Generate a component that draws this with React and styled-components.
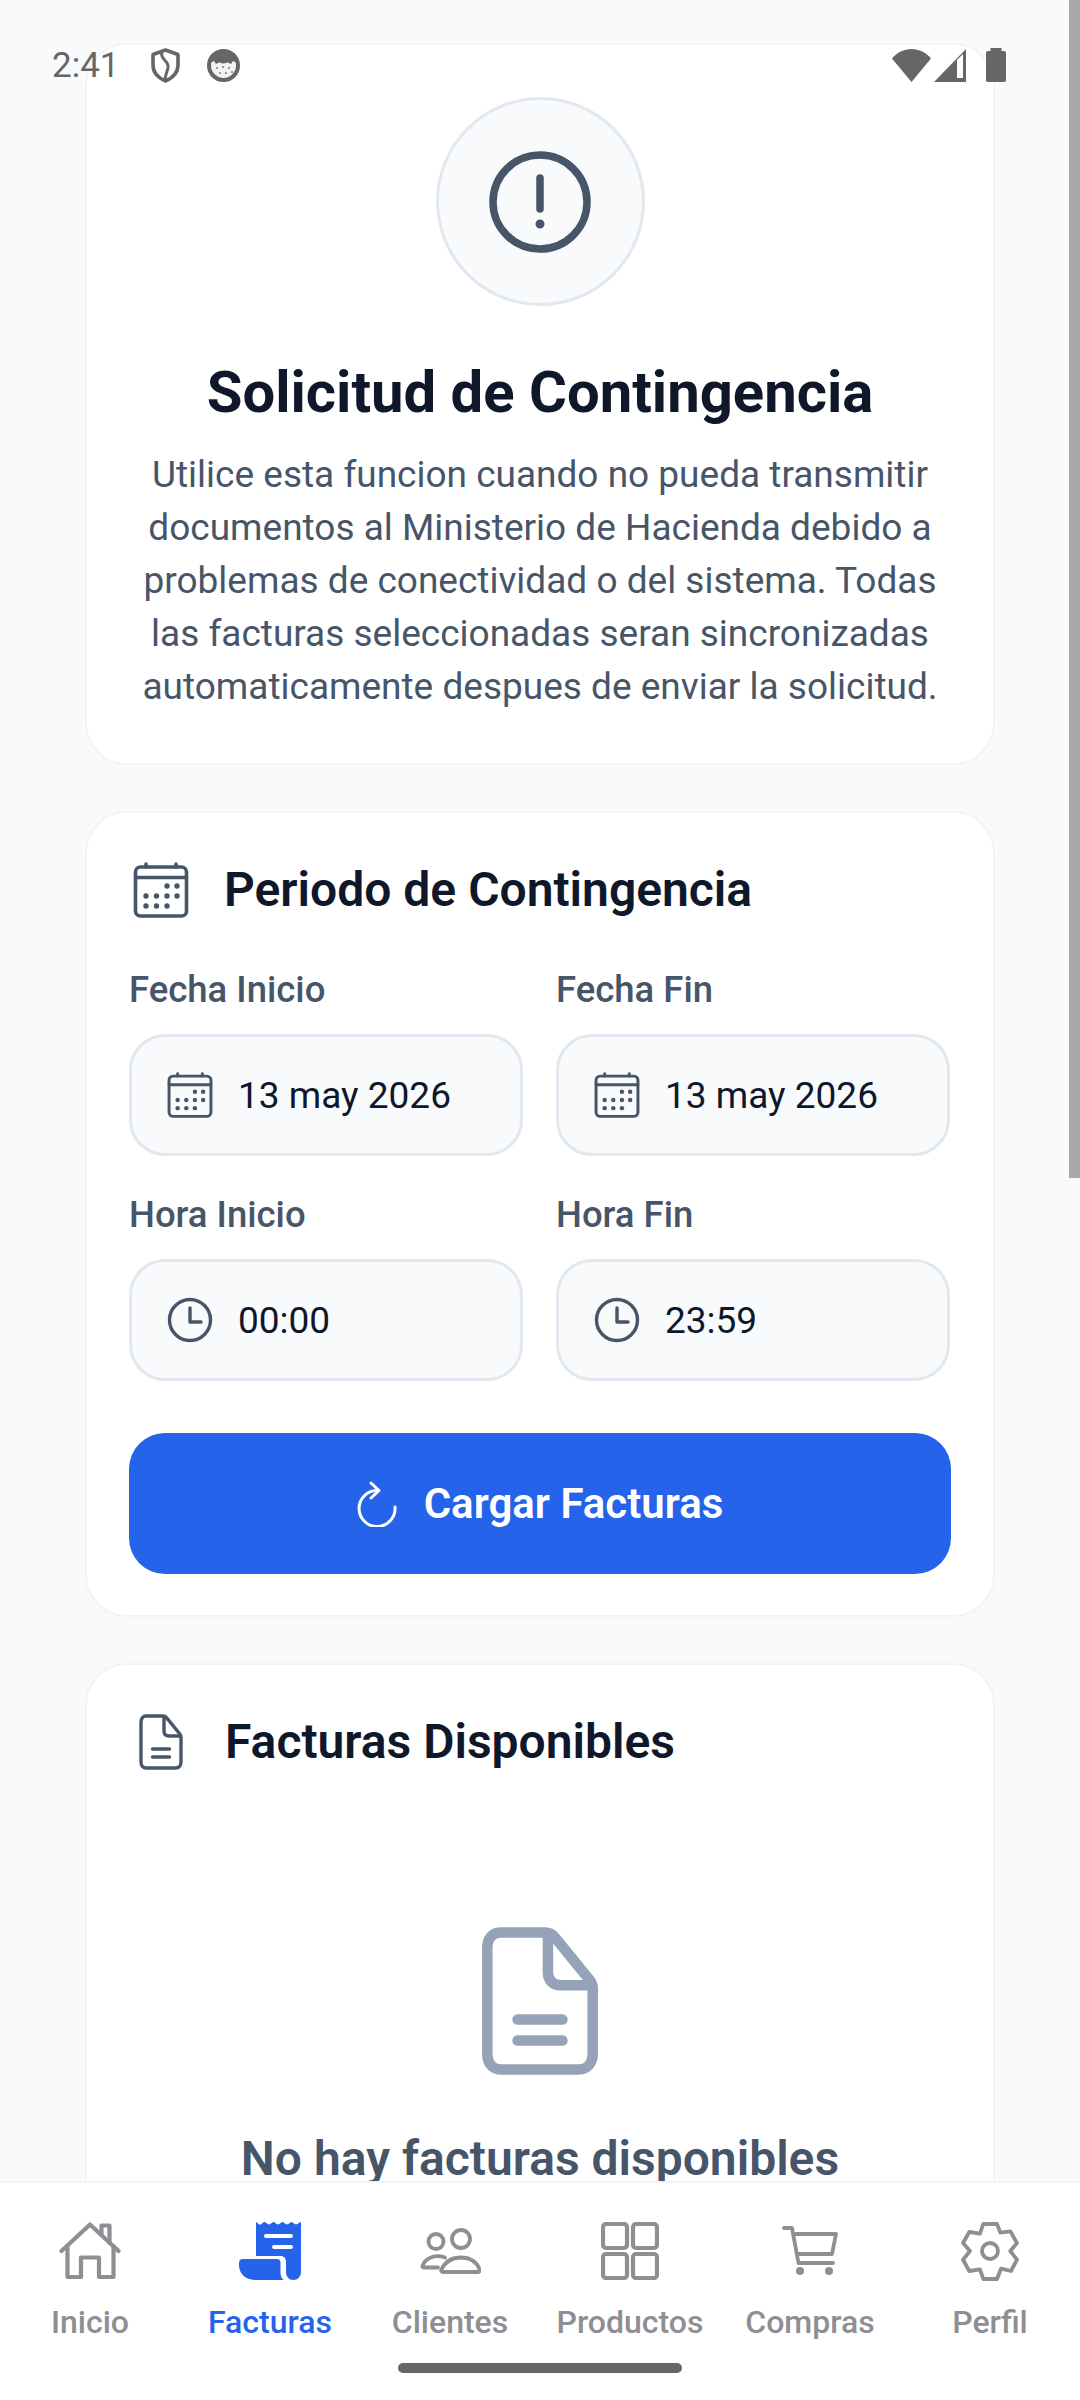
import React from "react";
import styled, { createGlobalStyle } from "styled-components";

const GlobalStyle = createGlobalStyle`
  html, body {
    margin: 0;
    padding: 0;
    background: #f8fafc;
    font-family: Roboto, "Liberation Sans", sans-serif;
  }
  * { box-sizing: border-box; }
`;

const Screen = styled.div`
  position: relative;
  width: 1080px;
  height: 2400px;
  overflow: hidden;
  background: #f8fafc;
`;

const Scroll = styled.div`
  display: flex;
  flex-direction: column;
  gap: 46px;
  padding: 43px 85px 0;
`;

const Card = styled.section`
  background: #fff;
  border: 2px solid #f1f5f9;
  border-radius: 42px;
  padding: ${(p) => p.$pad};
`;

const IntroCard = styled(Card)`
  display: flex;
  flex-direction: column;
  align-items: center;
  height: 722px;
`;

const AlertCircle = styled.div`
  width: 209px;
  height: 209px;
  border-radius: 50%;
  background: #f8fafc;
  border: 3px solid #e2e8f0;
  display: flex;
  align-items: center;
  justify-content: center;
`;

const Title = styled.h1`
  margin: 52px 0 0;
  font-size: 58px;
  line-height: 68px;
  font-weight: 700;
  color: #0f172a;
`;

const Intro = styled.p`
  margin: 22px 0 0;
  width: 800px;
  font-size: 37px;
  line-height: 53px;
  font-weight: 400;
  color: #475569;
  text-align: center;
`;

const CardHead = styled.div`
  display: flex;
  align-items: center;
  height: 60px;
  gap: ${(p) => p.$gap}px;
  padding-left: ${(p) => p.$inset}px;
`;

const CardTitle = styled.h2`
  margin: 0;
  font-size: 48px;
  line-height: 60px;
  font-weight: 600;
  color: #0f172a;
`;

const FieldGrid = styled.div`
  display: grid;
  grid-template-columns: 394px 394px;
  column-gap: 33px;
  row-gap: 38px;
  margin-top: 49px;
`;

const Field = styled.div`
  display: flex;
  flex-direction: column;
  gap: 23px;
`;

const Label = styled.label`
  font-size: 36.500px;
  line-height: 42px;
  font-weight: 500;
  color: #475569;
`;

const InputBox = styled.div`
  display: flex;
  align-items: center;
  gap: 25px;
  height: 122px;
  padding-left: 35px;
  background: #f8fafc;
  border: 3px solid #e2e8f0;
  border-radius: 36px;
  font-size: 37px;
  color: #0f172a;
`;

const LoadButton = styled.button`
  display: flex;
  align-items: center;
  justify-content: center;
  gap: 27px;
  width: 100%;
  height: 141px;
  margin-top: 52px;
  border: 0;
  border-radius: 36px;
  background: #2563eb;
  color: #fff;
  font-family: inherit;
  font-size: 42px;
  font-weight: 600;
`;

const Empty = styled.div`
  display: flex;
  flex-direction: column;
  align-items: center;
  padding-top: 155px;
`;

const EmptyTitle = styled.h3`
  margin: 56px 0 0;
  font-size: 48px;
  line-height: 56px;
  font-weight: 600;
  color: #475569;
`;

const StatusBar = styled.div`
  position: absolute;
  top: 46px;
  left: 52px;
  right: 74px;
  height: 38px;
  display: flex;
  align-items: center;
  color: #666;
`;

const Clock = styled.span`
  font-size: 35px;
  font-weight: 400;
  width: 99px;
`;

const FaceSlot = styled.span`
  display: flex;
  margin-left: 27px;
`;

const SignalSlot = styled.span`
  display: flex;
  margin-left: 3px;
`;

const BatterySlot = styled.span`
  display: flex;
  margin-left: 19px;
`;

const StatusGap = styled.div`
  flex: 1;
`;

const ScrollThumb = styled.div`
  position: absolute;
  top: 0;
  right: 0;
  width: 11px;
  height: 1178px;
  background: #a9a9a9;
`;

const BottomNav = styled.nav`
  position: absolute;
  left: 0;
  right: 0;
  bottom: 0;
  height: 219px;
  background: #fff;
  border-top: 2px solid #f1f5f9;
  display: grid;
  grid-template-columns: repeat(6, 180px);
  padding-top: 38px;
`;

const NavItem = styled.div`
  display: flex;
  flex-direction: column;
  align-items: center;
  gap: 23px;
  color: ${(p) => (p.$active ? "#2563eb" : "#8e8e93")};
`;

const NavLabel = styled.span`
  font-size: 32px;
  line-height: 36px;
  font-weight: 500;
`;

const NavIconSlot = styled.div`
  height: 60px;
  display: flex;
  align-items: center;
  justify-content: center;
`;

const HomeBar = styled.div`
  position: absolute;
  left: 398px;
  bottom: 27px;
  width: 284px;
  height: 10px;
  border-radius: 5px;
  background: #666;
`;

const Calendar = ({ size = 46 }) => (
  <svg width={size} height={size} viewBox="0 0 56 56" fill="none" stroke="#475569" strokeWidth="3.600" strokeLinecap="round" strokeLinejoin="round">
    <rect x="2.500" y="5" width="51" height="49" rx="5" />
    <path d="M2.500 15.500h51M13 2v3M43 2v3" />
    <g fill="#475569" stroke="none">
      <circle cx="34" cy="24" r="2.700" /><circle cx="44" cy="24" r="2.700" />
      <circle cx="13" cy="34" r="2.700" /><circle cx="23.500" cy="34" r="2.700" /><circle cx="34" cy="34" r="2.700" /><circle cx="44" cy="34" r="2.700" />
      <circle cx="13" cy="44" r="2.700" /><circle cx="23.500" cy="44" r="2.700" /><circle cx="34" cy="44" r="2.700" />
    </g>
  </svg>
);

const ClockIcon = () => (
  <svg width="46" height="46" viewBox="0 0 46 46" fill="none" stroke="#475569" strokeWidth="3.400" strokeLinecap="round" strokeLinejoin="round">
    <circle cx="23" cy="23" r="20.500" />
    <path d="M23 11v14h11" />
  </svg>
);

const DocIcon = ({ w, h, color, sw }) => (
  <svg width={w} height={h} viewBox="0 0 44 56" fill="none" stroke={color} strokeWidth={sw} strokeLinecap="round" strokeLinejoin="round">
    <path d="M7 2h17c1.500 0 2.600.6 3.500 1.700L40.800 20c.8 1 1.200 2 1.200 3.200V48c0 3.500-2 6-5.500 6h-29C3.800 54 2 51.500 2 48V8c0-3.500 1.800-6 5-6z" />
    <path d="M25 3v14c0 3 1.500 5 5 5h11" />
    <path d="M18 35h17M18 43h17" transform="translate(-4.500 0)" />
  </svg>
);

const RefreshIcon = () => (
  <svg width="40" height="46" viewBox="0 0 40 46" fill="none" stroke="#fff" strokeWidth="3" strokeLinecap="round" strokeLinejoin="round">
    <path d="M20 9.500A18 18 0 1 0 38 26" />
    <path d="M14 2l8 7.500-8 7.500" />
  </svg>
);

const HomeIcon = () => (
  <svg width="62" height="58" viewBox="0 0 62 58" fill="none" stroke="currentColor" strokeWidth="4.200" strokeLinecap="round" strokeLinejoin="round">
    <path d="M2.500 29L31 2.500 59.500 29" />
    <path d="M8.500 24v31H22V35.500h18V55h14.500V24" />
    <path d="M42.500 13V3.500h8V21" />
  </svg>
);

const ReceiptIcon = () => (
  <svg width="62" height="58" viewBox="0 0 62 58">
    <path fill="currentColor" d="M17 0c1.500 0 1.500 2.500 4 2.500S23.500 0 25.500 0s2.200 2.500 4.500 2.500S32.500 0 34.500 0 36.700 2.500 39 2.500 41.500 0 43.500 0s2.200 2.500 4.500 2.500S50.500 0 52.500 0 54.700 2.500 57 2.500 60 0 62 0v50c0 4.500-3.500 8-7.500 8-4.500 0-7.500-3.500-7.500-8V40c0-3.500-2-6-5.500-6H17z" />
    <path fill="currentColor" d="M4 37h34c2.200 0 3.500 1.200 3.500 3.500V50c0 3 .8 6 3 8H17C7 58 0 52 0 43v-2c0-2.500 1.500-4 4-4z" />
    <path stroke="#fff" strokeWidth="4" strokeLinecap="round" d="M27 14h25M35 25h17" />
  </svg>
);

const PeopleIcon = () => (
  <svg width="61" height="46" viewBox="0 0 61 46" fill="none" stroke="currentColor" strokeWidth="3.800" strokeLinecap="round" strokeLinejoin="round">
    <circle cx="16" cy="13.500" r="7.500" />
    <circle cx="41" cy="11" r="9" />
    <path d="M25 29.500C15 26 5 30 2.500 38c-.3 1 .3 1.500 1.500 1.500h14" />
    <path d="M23 44c-1.500 0-2.300-1-1.500-2.500C25 34 32 29.500 41 29.500s16 4.500 18.500 12c.5 1.500 0 2.500-1.500 2.500z" />
  </svg>
);

const GridIcon = () => (
  <svg width="58" height="58" viewBox="0 0 58 58" fill="none" stroke="currentColor" strokeWidth="4.200" strokeLinejoin="round">
    <rect x="2" y="2" width="24" height="24" rx="3" />
    <rect x="32" y="2" width="24" height="24" rx="3" />
    <rect x="2" y="32" width="24" height="24" rx="3" />
    <rect x="32" y="32" width="24" height="24" rx="3" />
  </svg>
);

const CartIcon = () => (
  <svg width="56" height="50" viewBox="0 0 56 50" fill="none" stroke="currentColor" strokeWidth="3.800" strokeLinecap="round" strokeLinejoin="round">
    <path d="M2 2h8l6.500 35h34.500" />
    <path d="M12 8h42l-4 20H15" />
    <circle cx="18" cy="45" r="4" fill="currentColor" stroke="none" />
    <circle cx="47" cy="45" r="4" fill="currentColor" stroke="none" />
  </svg>
);

const GearIcon = () => (
  <svg width="58" height="59" viewBox="0 0 58 59" fill="none" stroke="currentColor" strokeWidth="3.800" strokeLinecap="round" strokeLinejoin="round">
    <path d="M22.300 2H36l3.300 8.700 10-1.400L56 21l-6.700 8 6.700 8.700L50 49l-10-2.300L36 57h-13.700L19 47.300 8.300 49 2 37.700 9 29 2 21 8.300 10 19 11.700z" />
    <circle cx="29" cy="29" r="8" />
  </svg>
);

const navItems = [
  { label: "Inicio", icon: <HomeIcon /> },
  { label: "Facturas", icon: <ReceiptIcon />, active: true },
  { label: "Clientes", icon: <PeopleIcon /> },
  { label: "Productos", icon: <GridIcon /> },
  { label: "Compras", icon: <CartIcon /> },
  { label: "Perfil", icon: <GearIcon /> },
];

const fields = [
  { label: "Fecha Inicio", value: "13 may 2026", icon: <Calendar /> },
  { label: "Fecha Fin", value: "13 may 2026", icon: <Calendar /> },
  { label: "Hora Inicio", value: "00:00", icon: <ClockIcon /> },
  { label: "Hora Fin", value: "23:59", icon: <ClockIcon /> },
];

const App = () => {
  return (
    <>
      <GlobalStyle />
      <Screen>
        <Scroll>
          <IntroCard $pad="52px 40px 0">
            <AlertCircle>
              <svg width="102" height="102" viewBox="0 0 102 102" fill="none" stroke="#475569" strokeLinecap="round">
                <circle cx="51" cy="51" r="47" strokeWidth="7.500" />
                <path d="M51 27v31" strokeWidth="7.500" />
                <circle cx="51" cy="73" r="3.500" fill="#475569" strokeWidth="2" />
              </svg>
            </AlertCircle>
            <Title>Solicitud de Contingencia</Title>
            <Intro>
              Utilice esta funcion cuando no pueda transmitir documentos al Ministerio de Hacienda debido a problemas de conectividad o del sistema. Todas las facturas seleccionadas seran sincronizadas automaticamente despues de enviar la solicitud.
            </Intro>
          </IntroCard>

          <Card $pad="47px 42px 41px">
            <CardHead $gap={35} $inset={4}>
              <Calendar size={56} />
              <CardTitle>Periodo de Contingencia</CardTitle>
            </CardHead>
            <FieldGrid>
              {fields.map((f) => (
                <Field key={f.label}>
                  <Label>{f.label}</Label>
                  <InputBox>
                    {f.icon}
                    <span>{f.value}</span>
                  </InputBox>
                </Field>
              ))}
            </FieldGrid>
            <LoadButton>
              <RefreshIcon />
              Cargar Facturas
            </LoadButton>
          </Card>

          <Card $pad="47px 42px 60px">
            <CardHead $gap={42} $inset={10}>
              <DocIcon w={44} h={56} color="#475569" sw={3.400} />
              <CardTitle>Facturas Disponibles</CardTitle>
            </CardHead>
            <Empty>
              <DocIcon w={116} h={148} color="#94a3b8" sw={4} />
              <EmptyTitle>No hay facturas disponibles</EmptyTitle>
            </Empty>
          </Card>
        </Scroll>

        <StatusBar>
          <Clock>2:41</Clock>
          <svg width="29" height="35" viewBox="0 0 29 35" fill="none" stroke="#666" strokeWidth="3.600" strokeLinejoin="round">
            <path d="M14.500 2L27 6.500V17c0 8-5.500 13-12.500 16C7.500 30 2 25 2 17V6.500z" />
            <path d="M11 4c-3 7 8 9 6 16-1 4-3 8-3 12" strokeWidth="3" />
          </svg>
          <FaceSlot>
            <svg width="33" height="33" viewBox="0 0 33 33">
              <circle cx="16.500" cy="16.500" r="14.500" fill="#f2f2f2" stroke="#666" strokeWidth="4" />
              <path d="M3 14C4 6 9 2 16.500 2S29 6 30 14l-4-2-2 3-3-1.500-4.500 1-4.500-1-3 1.500-2-3z" fill="#666" />
              <g fill="#888">
                <circle cx="10" cy="19" r="1.100" /><circle cx="16" cy="18" r="1.100" /><circle cx="22" cy="19" r="1.100" />
                <circle cx="13" cy="24" r="1.100" /><circle cx="19" cy="24" r="1.100" /><circle cx="25" cy="23" r="1.100" />
              </g>
            </svg>
          </FaceSlot>
          <StatusGap />
          <svg width="39" height="33" viewBox="0 0 39 33">
            <path d="M19.500 33L0 9.500C5 3.500 12 0 19.500 0S34 3.500 39 9.500z" fill="#666" />
          </svg>
          <SignalSlot>
            <svg width="33" height="33" viewBox="0 0 33 33">
              <path d="M32 0v33H0z" fill="#666" />
              <path d="M23 11l6-6v24h-6z" fill="#fff" />
            </svg>
          </SignalSlot>
          <BatterySlot>
            <svg width="20" height="34" viewBox="0 0 20 34">
              <path d="M4.500 0h11v3H18c1.300 0 2 .8 2 2v27c0 1.300-.7 2-2 2H2c-1.300 0-2-.7-2-2V5c0-1.200.7-2 2-2h2.500z" fill="#666" />
            </svg>
          </BatterySlot>
        </StatusBar>

        <ScrollThumb />

        <BottomNav>
          {navItems.map((item) => (
            <NavItem key={item.label} $active={item.active}>
              <NavIconSlot>{item.icon}</NavIconSlot>
              <NavLabel>{item.label}</NavLabel>
            </NavItem>
          ))}
        </BottomNav>
        <HomeBar />
      </Screen>
    </>
  );
};

export default App;
